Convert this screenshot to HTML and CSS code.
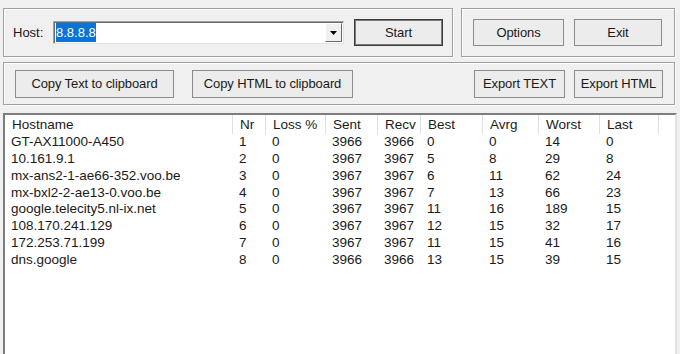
FILE: index.html
```html
<!DOCTYPE html>
<html lang="en">
<head>
  <meta charset="UTF-8" />
  <title>WinMTR</title>
  <link rel="stylesheet" href="styles.css">
</head>
<body>
  <div class="window">
    <div class="top-row">
      <div class="group host-group">
        <span class="host-label">Host:</span>
        <div class="combo">
          <span class="combo-text"><span class="selected">8.8.8.8</span></span>
          <span class="combo-button">
            <svg width="7" height="4" viewBox="0 0 7 4"><polygon points="0,0 7,0 3.5,4" fill="#000"/></svg>
          </span>
        </div>
        <button class="btn btn-default start-button">Start</button>
      </div>

      <div class="group actions-group">
        <button class="btn options-button">Options</button>
        <button class="btn exit-button">Exit</button>
      </div>
    </div>

    <div class="group export-group">
      <button class="btn copy-text">Copy Text to clipboard</button>
      <button class="btn copy-html">Copy HTML to clipboard</button>
      <button class="btn export-text">Export TEXT</button>
      <button class="btn export-html">Export HTML</button>
    </div>

    <div class="list">
      <table class="hops">
        <colgroup>
          <col class="col-host">
          <col class="col-nr">
          <col class="col-loss">
          <col class="col-sent">
          <col class="col-recv">
          <col class="col-best">
          <col class="col-avrg">
          <col class="col-worst">
          <col class="col-last">
          <col>
        </colgroup>
        <thead>
          <tr>
            <th>Hostname</th>
            <th>Nr</th>
            <th>Loss %</th>
            <th>Sent</th>
            <th>Recv</th>
            <th>Best</th>
            <th>Avrg</th>
            <th>Worst</th>
            <th>Last</th>
            <th class="filler"></th>
          </tr>
        </thead>
        <tbody>
          <tr><td>GT-AX11000-A450</td><td>1</td><td>0</td><td>3966</td><td>3966</td><td>0</td><td>0</td><td>14</td><td>0</td><td></td></tr>
          <tr><td>10.161.9.1</td><td>2</td><td>0</td><td>3967</td><td>3967</td><td>5</td><td>8</td><td>29</td><td>8</td><td></td></tr>
          <tr><td>mx-ans2-1-ae66-352.voo.be</td><td>3</td><td>0</td><td>3967</td><td>3967</td><td>6</td><td>11</td><td>62</td><td>24</td><td></td></tr>
          <tr><td>mx-bxl2-2-ae13-0.voo.be</td><td>4</td><td>0</td><td>3967</td><td>3967</td><td>7</td><td>13</td><td>66</td><td>23</td><td></td></tr>
          <tr><td>google.telecity5.nl-ix.net</td><td>5</td><td>0</td><td>3967</td><td>3967</td><td>11</td><td>16</td><td>189</td><td>15</td><td></td></tr>
          <tr><td>108.170.241.129</td><td>6</td><td>0</td><td>3967</td><td>3967</td><td>12</td><td>15</td><td>32</td><td>17</td><td></td></tr>
          <tr><td>172.253.71.199</td><td>7</td><td>0</td><td>3967</td><td>3967</td><td>11</td><td>15</td><td>41</td><td>16</td><td></td></tr>
          <tr><td>dns.google</td><td>8</td><td>0</td><td>3966</td><td>3966</td><td>13</td><td>15</td><td>39</td><td>15</td><td></td></tr>
        </tbody>
      </table>
    </div>
  </div>
</body>
</html>
```

FILE: styles.css
```css
body {
  margin: 0;
  padding: 0;
  height: 100vh;
  overflow: hidden;
  background: #f0f0f0;
  font-family: "Liberation Sans", Arial, sans-serif;
  font-size: 13px;
  color: #1a1a1a;
}

.window {
  padding: 8px 0 0 3px;
}

.top-row {
  display: flex;
  gap: 8px;
}

.group {
  box-sizing: border-box;
  display: flex;
  align-items: center;
  border: 1px solid #a0a0a0;
  box-shadow: inset 1px 1px 0 #fff, 1px 1px 0 #fff;
}

.host-group {
  width: 450px;
  height: 49px;
  padding-left: 9px;
}

.actions-group {
  width: 214px;
  height: 49px;
  padding-left: 11px;
  gap: 10px;
}

.export-group {
  width: 672px;
  height: 43px;
  margin-top: 5px;
  padding: 0 11px;
}

.host-label {
  width: 40px;
}

.combo {
  box-sizing: border-box;
  display: flex;
  align-items: center;
  width: 291px;
  height: 23px;
  margin-right: 10px;
  background: #fff;
  border: 1px solid;
  border-color: #a0a0a0 #e3e3e3 #e3e3e3 #a0a0a0;
  box-shadow: inset 1px 1px 0 #696969;
}

.combo-text {
  flex: 1;
  padding-left: 2px;
}

.selected {
  background: #0a74d6;
  color: #fff;
  padding: 2px 0;
}

.combo-button {
  box-sizing: border-box;
  display: flex;
  align-items: center;
  justify-content: center;
  width: 17px;
  height: 19px;
  margin-right: 1px;
  background: #f0f0f0;
  border: 1px solid;
  border-color: #fff #696969 #696969 #fff;
}

.btn {
  box-sizing: border-box;
  height: 27px;
  padding: 0;
  background: #ececec;
  border: 1px solid #8c8c8c;
  font: inherit;
  letter-spacing: -0.1px;
  color: #1a1a1a;
}

.btn-default {
  border-color: #3c3c3c;
  box-shadow: inset 0 0 0 1px #7a7a7a;
}

.start-button {
  width: 89px;
}

.options-button {
  width: 91px;
}

.exit-button {
  width: 88px;
}

.export-group .btn {
  height: 28px;
}

.copy-text {
  width: 159px;
}

.copy-html {
  width: 161px;
  margin-left: 18px;
}

.export-text {
  width: 91px;
  margin-left: auto;
}

.export-html {
  width: 89px;
  margin-left: 9px;
}

.list {
  box-sizing: border-box;
  width: 674px;
  height: 300px;
  margin-top: 8px;
  background: #fff;
  border: 2px solid;
  border-color: #7d7d7d #e3e3e3 #e3e3e3 #7d7d7d;
}

.hops {
  width: 670px;
  table-layout: fixed;
  border-collapse: separate;
  border-spacing: 0;
  font-size: 13.5px;
}

.col-host { width: 228px; }
.col-nr { width: 33px; }
.col-loss { width: 60px; }
.col-sent { width: 52px; }
.col-recv { width: 43px; }
.col-best { width: 62px; }
.col-avrg { width: 56px; }
.col-worst { width: 61px; }
.col-last { width: 59px; }

.hops th {
  height: 19px;
  padding: 0 0 0 7px;
  font-weight: normal;
  text-align: left;
  white-space: nowrap;
  overflow: hidden;
  border-right: 1px solid #e0e0e0;
}

.hops th.filler {
  border-right: none;
}

.hops td {
  height: 16.85px;
  padding: 0 0 0 6px;
  line-height: 16.85px;
  white-space: nowrap;
  overflow: hidden;
}
```
